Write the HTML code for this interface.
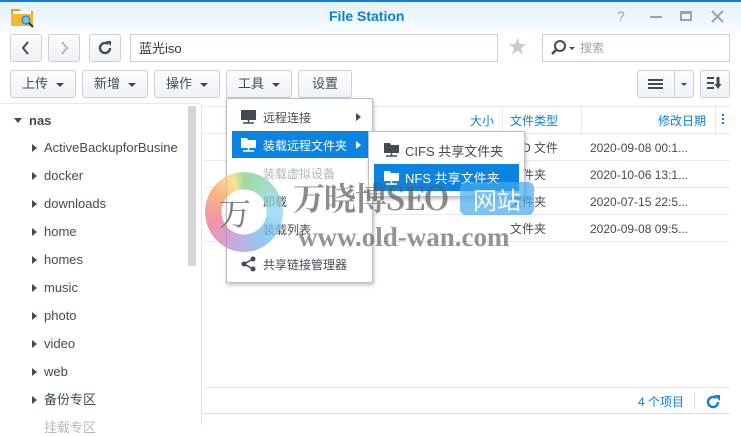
<!DOCTYPE html>
<html><head><meta charset="utf-8">
<style>
*{box-sizing:border-box;margin:0;padding:0}
body{width:741px;height:426px;overflow:hidden;background:#fff;font-family:"Liberation Sans","Noto Sans CJK SC",sans-serif;font-size:13px;color:#414b55;position:relative}
.abs{position:absolute}
.title{left:0;top:0;width:741px;height:32px;background:linear-gradient(#e3f0fb,#f7fbfe);border-top:2px solid #0a7fdc}
.btn{position:absolute;border:1px solid #c8d0d8;border-radius:3px;background:linear-gradient(#fbfcfd,#eef2f6);text-align:center;color:#414b55;font-size:13px;line-height:26px}
.caret{display:inline-block;width:0;height:0;border-left:4px solid transparent;border-right:4px solid transparent;border-top:4px solid #414b55;vertical-align:middle;margin-left:8px}
.tri{display:inline-block;width:0;height:0;border-top:4px solid transparent;border-bottom:4px solid transparent;border-left:5px solid #414b55;position:absolute}
.tree div{position:absolute;left:44px;font-size:13px;color:#414b55;line-height:16px}
.hdr{color:#0a7fdc;font-size:12px;line-height:14px}
.row{position:absolute;left:203px;width:527px;height:1px;background:#e4eaf0}
.cell{position:absolute;font-size:12px;color:#414b55;line-height:14px}
.menu{position:absolute;background:#fff;border:1px solid #b9c2cb;box-shadow:1px 2px 4px rgba(0,0,0,.25)}
.mi{position:absolute;font-size:12px;color:#414b55;white-space:nowrap;line-height:14px}
</style></head><body>
<div class="abs title"></div>
<svg class="abs" style="left:10px;top:6px" width="26" height="22" viewBox="0 0 26 22">
<path d="M1 3h8l2 2h12v15H1z" fill="#e5a020"/><rect x="3" y="5" width="18" height="5" fill="#fff"/><path d="M1 8h22v12H1z" fill="#f5b834"/>
<circle cx="16" cy="14" r="4" fill="#6cc6f0" stroke="#2a86b8" stroke-width="1.2"/><path d="M19 17l4 4" stroke="#333" stroke-width="2"/></svg>
<div class="abs" style="left:329px;top:8px;font-weight:bold;font-size:14px;color:#0a7fdc">File Station</div>
<div class="abs" style="left:617px;top:8px;font-size:14px;color:#9aa3ad">?</div>
<div class="abs" style="left:650px;top:16px;width:12px;height:2px;background:#9aa3ad"></div>
<div class="abs" style="left:680px;top:11px;width:12px;height:10px;border:2px solid #9aa3ad;border-top-width:3px"></div>
<svg class="abs" style="left:711px;top:10px" width="13" height="13"><path d="M1 1l11 11M12 1L1 12" stroke="#9aa3ad" stroke-width="2"/></svg>

<div class="btn" style="left:10px;top:34px;width:32px;height:28px"><svg width="12" height="26" viewBox="0 0 12 26"><path d="M8 7l-5 6 5 6" stroke="#414b55" stroke-width="2" fill="none"/></svg></div>
<div class="btn" style="left:48px;top:34px;width:32px;height:28px"><svg width="12" height="26" viewBox="0 0 12 26"><path d="M4 7l5 6-5 6" stroke="#b0b8c0" stroke-width="2" fill="none"/></svg></div>
<div class="btn" style="left:89px;top:34px;width:32px;height:28px"><svg width="16" height="26" viewBox="0 0 16 26"><path d="M13 13a5 5 0 1 1-2-4" stroke="#414b55" stroke-width="2.4" fill="none"/><path d="M9 6h5v5z" fill="#414b55"/></svg></div>
<div class="abs" style="left:130px;top:34px;width:368px;height:28px;border:1px solid #c8d0d8;background:#fff"></div>
<div class="abs" style="left:139px;top:41px;font-size:13px;color:#333;line-height:16px">蓝光iso</div>
<div class="abs" style="left:508px;top:37px;font-size:19px;color:#c5ccd4;line-height:22px">★</div>
<div class="abs" style="left:542px;top:34px;width:188px;height:28px;border:1px solid #c8d0d8;background:#fff"></div>
<svg class="abs" style="left:550px;top:39px" width="28" height="18"><circle cx="10" cy="7" r="5" stroke="#414b55" stroke-width="2" fill="none"/><path d="M6 11l-4 4" stroke="#414b55" stroke-width="2.4"/><path d="M19 8h6l-3 3z" fill="#414b55"/></svg>
<div class="abs" style="left:580px;top:41px;font-size:12px;color:#9aa3ad;line-height:14px">搜索</div>

<div class="btn" style="left:10px;top:70px;width:66px;height:28px">上传<span class="caret"></span></div>
<div class="btn" style="left:82px;top:70px;width:66px;height:28px">新增<span class="caret"></span></div>
<div class="btn" style="left:154px;top:70px;width:66px;height:28px">操作<span class="caret"></span></div>
<div class="btn" style="left:226px;top:70px;width:66px;height:28px">工具<span class="caret"></span></div>
<div class="btn" style="left:298px;top:70px;width:54px;height:28px">设置</div>
<div class="btn" style="left:637px;top:70px;width:57px;height:28px"><div class="abs" style="left:10px;top:8px;width:15px;height:10px;border-top:2px solid #414b55;border-bottom:2px solid #414b55"></div><div class="abs" style="left:10px;top:12px;width:15px;height:2px;background:#414b55"></div><div class="abs" style="left:36px;top:0;width:1px;height:26px;background:#c8d0d8"></div><div class="abs" style="left:43px;top:12px;border-left:3px solid transparent;border-right:3px solid transparent;border-top:3px solid #414b55"></div></div>
<div class="btn" style="left:700px;top:70px;width:30px;height:28px"><svg width="20" height="16" viewBox="0 0 20 16" style="margin-top:5px"><path d="M2 2h7M2 7h7M2 12h7" stroke="#414b55" stroke-width="2"/><path d="M13 1v8" stroke="#414b55" stroke-width="3"/><path d="M9.5 8h7l-3.5 5z" fill="#414b55"/></svg></div>

<div class="abs" style="left:0;top:103px;width:200px;height:1px;background:#e4eaf0"></div>
<div class="abs" style="left:188px;top:106px;width:8px;height:160px;background:#d3d7db"></div>
<div class="abs" style="left:201px;top:104px;width:1px;height:322px;background:#e0e5ea"></div>
<div class="abs" style="left:14px;top:118px;border-left:4px solid transparent;border-right:4px solid transparent;border-top:5px solid #414b55"></div>
<div class="abs" style="left:29px;top:113px;font-weight:bold;font-size:13px;line-height:16px">nas</div>
<div class="tree">
<span class="tri" style="left:32px;top:144px"></span><div style="top:140px">ActiveBackupforBusine</div>
<span class="tri" style="left:32px;top:172px"></span><div style="top:168px">docker</div>
<span class="tri" style="left:32px;top:200px"></span><div style="top:196px">downloads</div>
<span class="tri" style="left:32px;top:228px"></span><div style="top:224px">home</div>
<span class="tri" style="left:32px;top:256px"></span><div style="top:252px">homes</div>
<span class="tri" style="left:32px;top:284px"></span><div style="top:280px">music</div>
<span class="tri" style="left:32px;top:312px"></span><div style="top:308px">photo</div>
<span class="tri" style="left:32px;top:340px"></span><div style="top:336px">video</div>
<span class="tri" style="left:32px;top:368px"></span><div style="top:364px">web</div>
<span class="tri" style="left:32px;top:396px"></span><div style="top:392px">备份专区</div>
<div style="top:420px;color:#b0b8c0">挂载专区</div>
</div>

<div class="row" style="top:106px"></div>
<div class="row" style="top:133px"></div>
<div class="abs" style="left:502px;top:107px;width:1px;height:26px;background:#e4eaf0"></div>
<div class="abs" style="left:581px;top:107px;width:1px;height:26px;background:#e4eaf0"></div>
<div class="abs" style="left:715px;top:107px;width:1px;height:26px;background:#e4eaf0"></div>
<div class="abs hdr" style="left:470px;top:114px">大小</div>
<div class="abs hdr" style="left:510px;top:114px">文件类型</div>
<div class="abs hdr" style="left:658px;top:114px">修改日期</div>
<div class="abs" style="left:722px;top:114px;width:2px;height:2px;background:#0a7fdc;box-shadow:0 4px 0 #0a7fdc,0 8px 0 #0a7fdc"></div>
<div class="row" style="top:160px"></div>
<div class="row" style="top:187px"></div>
<div class="row" style="top:214px"></div>
<div class="row" style="top:241px"></div>
<div class="cell" style="left:510px;top:141px">ISO 文件</div>
<div class="cell" style="left:510px;top:168px">文件夹</div>
<div class="cell" style="left:510px;top:195px">文件夹</div>
<div class="cell" style="left:510px;top:222px">文件夹</div>
<div class="cell" style="left:590px;top:141px">2020-09-08 00:1...</div>
<div class="cell" style="left:590px;top:168px">2020-10-06 13:1...</div>
<div class="cell" style="left:590px;top:195px">2020-07-15 22:5...</div>
<div class="cell" style="left:590px;top:222px">2020-09-08 09:5...</div>

<div class="row" style="top:387px"></div>
<div class="row" style="top:413px;background:#d5e0ea"></div>
<div class="abs" style="left:638px;top:395px;font-size:12px;color:#0a7fdc;line-height:14px">4 个项目</div>
<div class="abs" style="left:694px;top:392px;width:1px;height:18px;background:#d5dde5"></div>
<svg class="abs" style="left:706px;top:394px" width="16" height="16"><path d="M12 8a5 5 0 1 1-2-4" stroke="#0a7fdc" stroke-width="2.4" fill="none"/><path d="M8 1h6v6z" fill="#0a7fdc"/></svg>

<div class="menu" style="left:226px;top:98px;width:147px;height:185px"></div>
<div class="abs" style="left:232px;top:131px;width:136px;height:27px;background:#0a84e0"></div>
<svg class="abs" style="left:240px;top:109px" width="17" height="16"><rect x="1" y="1" width="15" height="10" fill="#414b55"/><path d="M8.5 11v3M3 14h11" stroke="#414b55" stroke-width="1.5"/></svg>
<div class="mi" style="left:263px;top:111px">远程连接</div><span class="tri" style="left:356px;top:113px"></span>
<svg class="abs" style="left:240px;top:137px" width="17" height="16"><path d="M1 1h6l1 2h8v8H1z" fill="#fff"/><path d="M8.5 11v3M3 14h11" stroke="#fff" stroke-width="1.5"/></svg>
<div class="mi" style="left:263px;top:139px;color:#fff">装载远程文件夹</div><span class="tri" style="left:356px;top:141px;border-left-color:#fff"></span>
<div class="mi" style="left:263px;top:167px;color:#b0b8c0">装载虚拟设备</div>
<div class="mi" style="left:263px;top:195px">卸载</div>
<div class="mi" style="left:263px;top:223px">装载列表</div>
<svg class="abs" style="left:241px;top:256px" width="16" height="16"><circle cx="12" cy="3" r="2.5" fill="#414b55"/><circle cx="3" cy="8" r="2.5" fill="#414b55"/><circle cx="12" cy="13" r="2.5" fill="#414b55"/><path d="M12 3L3 8l9 5" stroke="#414b55" stroke-width="1.5" fill="none"/></svg>
<div class="mi" style="left:263px;top:258px">共享链接管理器</div>

<div class="menu" style="left:368px;top:131px;width:157px;height:66px"></div>
<div class="abs" style="left:374px;top:164px;width:145px;height:27px;background:#0a84e0"></div>
<svg class="abs" style="left:383px;top:142px" width="17" height="16"><path d="M1 1h6l1 2h8v8H1z" fill="#414b55"/><path d="M8.5 11v3M3 14h11" stroke="#414b55" stroke-width="1.5"/></svg>
<div class="mi" style="left:405px;top:144px;font-size:13px;line-height:16px">CIFS 共享文件夹</div>
<svg class="abs" style="left:383px;top:170px" width="17" height="16"><path d="M1 1h6l1 2h8v8H1z" fill="#fff"/><path d="M8.5 11v3M3 14h11" stroke="#fff" stroke-width="1.5"/></svg>
<div class="mi" style="left:405px;top:171px;font-size:13px;color:#fff;line-height:16px">NFS 共享文件夹</div>

<div class="abs" style="left:205px;top:172px;width:78px;height:80px;border-radius:50%;background:conic-gradient(#7fcf7f,#8cd4f4 25%,#6fb8ee 40%,#b48cd8 55%,#ee6f86 70%,#f4a05e 85%,#f6dc78 95%,#7fcf7f);-webkit-mask:radial-gradient(circle,transparent 22px,#000 23px);mask:radial-gradient(circle,transparent 22px,#000 23px);opacity:.75"></div>
<div class="abs" style="left:219px;top:194px;font-family:'Noto Serif CJK SC',serif;font-size:32px;line-height:36px;color:rgba(80,80,80,.75)">万</div>
<div class="abs" style="left:293px;top:178px;font-family:'Noto Serif CJK SC','Liberation Serif',serif;font-weight:bold;font-size:32px;line-height:38px;color:rgba(90,90,90,.7);white-space:nowrap;letter-spacing:-1px">万晓博SEO</div>
<div class="abs" style="left:460px;top:182px;width:74px;height:33px;border-radius:6px;background:rgba(70,170,235,.7);color:rgba(255,255,255,.9);font-size:24px;line-height:33px;text-align:center;font-family:'Noto Sans CJK SC',sans-serif">网站</div>
<div class="abs" style="left:298px;top:222px;font-family:'Liberation Serif',serif;font-weight:bold;font-size:27px;line-height:30px;color:rgba(90,90,90,.65);white-space:nowrap">www.old-wan.com</div>
</body></html>
